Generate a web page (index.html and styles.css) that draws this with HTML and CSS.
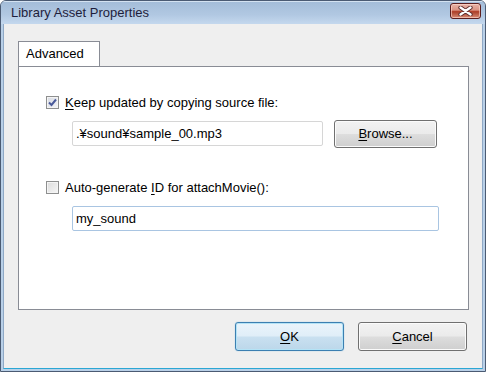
FILE: index.html
```html
<!DOCTYPE html>
<html>
<head>
<meta charset="utf-8">
<link rel="stylesheet" href="styles.css">
</head>
<body>
<div class="window">
  <div class="titlebar">
    <span class="title">Library Asset Properties</span>
    <div class="close">
      <svg width="17" height="10" viewBox="0 0 17 10">
        <path d="M3.5 1.5 L13.5 8.5 M13.5 1.5 L3.5 8.5" stroke="#5a2a2a" stroke-width="4.2" stroke-linecap="round"/>
        <path d="M3.5 1.5 L13.5 8.5 M13.5 1.5 L3.5 8.5" stroke="#ffffff" stroke-width="2.4" stroke-linecap="round"/>
      </svg>
    </div>
  </div>
  <div class="client">
    <div class="tabs"><div class="tab">Advanced</div></div>
    <div class="panel">
      <div class="check-row first">
        <span class="checkbox checked">
          <svg width="11" height="11" viewBox="0 0 11 11"><path d="M2 5.5 L4.5 8 L9 2.5" fill="none" stroke="#4a5a9a" stroke-width="2"/></svg>
        </span>
        <span class="label"><u>K</u>eep updated by copying source file:</span>
      </div>
      <div class="field-row">
        <div class="input gray">.¥sound¥sample_00.mp3</div>
        <div class="btn">
          <span><u>B</u>rowse...</span>
        </div>
      </div>
      <div class="check-row second">
        <span class="checkbox"></span>
        <span class="label">Auto-generate <u>I</u>D for attachMovie():</span>
      </div>
      <div class="field-row second-field">
        <div class="input blue wide">my_sound</div>
      </div>
    </div>
    <div class="buttons">
      <div class="btn dlg default"><span><u>O</u>K</span></div>
      <div class="btn dlg"><span><u>C</u>ancel</span></div>
    </div>
  </div>
</div>
</body>
</html>
```
FILE: styles.css
```css
* { box-sizing: border-box; }
html, body { margin: 0; padding: 0; background: #ffffff; }
body {
  font-family: "Liberation Sans", Arial, sans-serif;
  font-size: 13px;
  color: #000;
}
.window {
  width: 486px;
  height: 372px;
  display: flex;
  flex-direction: column;
  border: 1px solid #4b5b73;
  border-radius: 6px 6px 0 0;
  background: #b9d0e8;
  overflow: hidden;
}
.titlebar {
  height: 23px;
  flex: none;
  display: flex;
  align-items: center;
  justify-content: space-between;
  padding: 0 4px 0 10px;
  background: linear-gradient(#a3bcd8 0%, #b1c8e2 60%, #c4d8ee 100%);
  box-shadow: inset 0 1px 0 #d4e2f1;
}
.title {
  color: #1e1e3c;
  font-size: 13px;
  margin-top: 0;
}
.close {
  width: 31px;
  height: 16px;
  margin-top: -3px;
  border: 1px solid #5b1e1e;
  border-radius: 3px;
  background: linear-gradient(#e8b3a6 0%, #d99383 45%, #b4402b 50%, #b04a33 62%, #d98d78 100%);
  box-shadow: inset 0 0 0 1px rgba(255,220,210,0.6);
  display: flex;
  align-items: center;
  justify-content: center;
}
.client {
  flex: 1;
  margin: 0 2px 2px 2px;
  background: #efefef;
  border-left: 1px solid #8fa9c6;
  border-right: 1px solid #8fa9c6;
  border-bottom: 1px solid #2aa7d4;
  padding: 17px 13px 0 14px;
  display: flex;
  flex-direction: column;
}
.tabs { display: flex; height: 25px; }
.tab {
  width: 82px;
  height: 25px;
  background: #ffffff;
  border: 1px solid #898c95;
  border-bottom: none;
  padding: 4px 0 0 7px;
  position: relative;
  z-index: 1;
  margin-bottom: -1px;
}
.panel {
  height: 244px;
  background: #ffffff;
  border: 1px solid #898c95;
  padding: 0 0 0 27px;
}
.check-row {
  display: flex;
  align-items: center;
  height: 16px;
}
.check-row.first { margin-top: 27px; }
.check-row.second { margin-top: 31px; }
.checkbox {
  width: 13px;
  height: 13px;
  border: 1px solid #8e8f8f;
  background: linear-gradient(135deg, #dcdcdc, #f6f6f6);
  box-shadow: inset 0 0 0 1px #f4f4f4;
  display: flex;
  align-items: center;
  justify-content: center;
  flex: none;
}
.checkbox.checked { background: linear-gradient(135deg, #d8dbe3, #f3f4f7); }
.label { margin-left: 6px; color: #000; }
.field-row {
  display: flex;
  align-items: flex-start;
  margin-top: 10px;
  padding-left: 26px;
  gap: 11px;
}
.field-row.second-field { margin-top: 11px; }
.input {
  width: 251px;
  height: 25px;
  margin-top: 1px;
  border: 1px solid #d6d6d6;
  border-radius: 2px;
  padding: 4px 0 0 3px;
  background: #fff;
}
.input.blue { border-color: #a9c5e2; }
.input.wide { width: 367px; margin-top: 0; }
.btn {
  width: 103px;
  height: 28px;
  border: 1px solid #707070;
  border-radius: 3px;
  background: linear-gradient(#f2f2f2 0%, #ebebeb 48%, #dddddd 52%, #cfcfcf 100%);
  box-shadow: inset 0 0 0 1px #fbfbfb;
  display: flex;
  align-items: center;
  justify-content: center;
}
.btn span { margin-top: -1px; }
.buttons {
  display: flex;
  justify-content: flex-end;
  gap: 14px;
  margin-top: 12px;
  padding-right: 2px;
}
.btn.dlg { width: 109px; height: 29px; }
.btn.default {
  border-color: #3c7fb1;
  background: linear-gradient(#eaf4fb 0%, #e0eef8 48%, #c9e0f0 52%, #bcd7ea 100%);
  box-shadow: inset 0 0 0 1px #b4e3f6, 0 0 1px #61b5e0;
}
u { text-decoration: underline; text-underline-offset: 2px; }
```
